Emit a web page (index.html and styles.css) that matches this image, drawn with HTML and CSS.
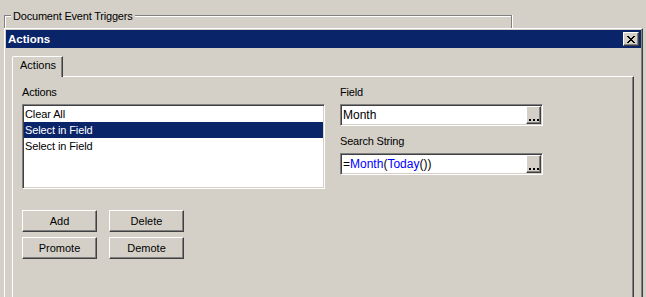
FILE: index.html
```html
<html>
<head>
    <title>Actions</title>
    <link rel="stylesheet" href="styles.css">
</head>
<body>
<div class="group">
    <span class="legend">Document Event Triggers</span>
</div>
<div class="dialog">
    <div class="titlebar">
        <span class="title">Actions</span>
        <button class="close" type="button">
            <svg width="8" height="7" viewBox="0 0 8 7" shape-rendering="crispEdges">
                <rect x="0" y="0" width="2" height="1"/><rect x="6" y="0" width="2" height="1"/>
                <rect x="1" y="1" width="2" height="1"/><rect x="5" y="1" width="2" height="1"/>
                <rect x="2" y="2" width="4" height="1"/>
                <rect x="3" y="3" width="2" height="1"/>
                <rect x="2" y="4" width="4" height="1"/>
                <rect x="1" y="5" width="2" height="1"/><rect x="5" y="5" width="2" height="1"/>
                <rect x="0" y="6" width="2" height="1"/><rect x="6" y="6" width="2" height="1"/>
            </svg>
        </button>
    </div>
    <div class="tabs">
        <div class="tab-row">
            <div class="tab">Actions</div>
        </div>
        <div class="panel">
            <div class="cols">
                <div>
                    <div class="label">Actions</div>
                    <div class="listbox">
                        <div class="item">Clear All</div>
                        <div class="item selected">Select in Field</div>
                        <div class="item">Select in Field</div>
                    </div>
                </div>
                <div>
                    <div class="label">Field</div>
                    <div class="field">
                        <span class="value">Month</span>
                        <span class="browse"><i></i><i></i><i></i></span>
                    </div>
                    <div class="label second">Search String</div>
                    <div class="field">
                        <span class="value">=<span class="fn">Month</span>(<span class="fn">Today</span>())</span>
                        <span class="browse"><i></i><i></i><i></i></span>
                    </div>
                </div>
            </div>
            <div class="buttons">
                <button type="button">Add</button>
                <button type="button">Delete</button>
                <button type="button">Promote</button>
                <button type="button">Demote</button>
            </div>
        </div>
    </div>
</div>
</body>
</html>
```

FILE: styles.css
```css
html, body {
    margin: 0;
    background-color: #D4D0C8;
    color: #000;
    font-family: "Liberation Sans", Arial, sans-serif;
    font-size: 11px;
    overflow: hidden;
}

/* etched group frame behind the dialog */
.group {
    box-sizing: border-box;
    margin: 15px 0 0 4px;
    width: 508px;
    height: 13px;
    border: 1px solid #808080;
    border-bottom: none;
    box-shadow: inset 1px 1px 0 #fff, 1px 0 0 #fff;
}

.legend {
    display: inline-block;
    margin: -6px 0 0 6px;
    padding: 0 2px;
    line-height: 13px;
    letter-spacing: -0.2px;
    background-color: #D4D0C8;
}

/* raised 3d look shared by window, buttons */
.dialog, .close, .browse, button {
    border: 1px solid;
    border-color: #fff #404040 #404040 #fff;
    box-shadow: inset -1px -1px 0 #808080;
    background-color: #D4D0C8;
}

.dialog {
    box-sizing: border-box;
    margin-left: 4px;
    width: 639px;
    height: 290px;
    padding: 1px;
}

.titlebar {
    display: flex;
    align-items: center;
    justify-content: space-between;
    height: 18px;
    padding-left: 2px;
    background-color: #0A246A;
}

.title {
    color: #fff;
    font-weight: bold;
    font-size: 11.5px;
}

.close {
    display: flex;
    align-items: center;
    justify-content: center;
    box-sizing: border-box;
    width: 16px;
    height: 14px;
    margin-right: 2px;
    padding: 0;
}

.tabs {
    margin: 8px 7px 0 6px;
}

.tab-row {
    display: flex;
    height: 20px;
}

.tab {
    position: relative;
    z-index: 1;
    box-sizing: border-box;
    width: 51px;
    height: 21px;
    padding: 1px 0 0 7px;
    line-height: 14px;
    border: 1px solid #fff;
    border-right-color: #404040;
    border-bottom: none;
    border-top-left-radius: 2px;
    box-shadow: inset -1px 0 0 #808080;
    background-color: #D4D0C8;
}

.panel {
    height: 240px;
    padding: 8px 0 0 9px;
    border: 1px solid;
    border-color: #fff #404040 #404040 #fff;
    box-shadow: inset -1px -1px 0 #808080;
}

.cols {
    display: grid;
    grid-template-columns: 303px 203px;
    column-gap: 15px;
    align-items: start;
}

.label {
    height: 14px;
    line-height: 14px;
    margin-bottom: 5px;
    letter-spacing: -0.2px;
}

.label.second {
    margin-top: 8px;
}

/* sunken white boxes */
.listbox, .field {
    box-sizing: border-box;
    border: 1px solid;
    border-color: #808080 #fff #fff #808080;
    box-shadow: inset 1px 1px 0 #404040, inset -1px -1px 0 #D4D0C8;
    background-color: #fff;
    padding: 1px;
}

.listbox {
    height: 85px;
}

.item {
    height: 16px;
    line-height: 16px;
    padding-left: 1px;
    letter-spacing: -0.1px;
}

.item.selected {
    background-color: #0A246A;
    color: #fff;
}

.field {
    display: flex;
    height: 22px;
}

.value {
    flex: 1;
    padding-left: 1px;
    line-height: 18px;
    font-size: 12px;
}

.fn {
    color: #0000FF;
}

.browse {
    box-sizing: border-box;
    display: flex;
    align-items: flex-end;
    justify-content: center;
    gap: 2px;
    width: 15px;
    height: 18px;
    padding-bottom: 2px;
}

.browse i {
    width: 2px;
    height: 2px;
    background-color: #000;
}

.buttons {
    display: grid;
    grid-template-columns: 75px 75px;
    gap: 5px 12px;
    margin-top: 21px;
}

button {
    height: 22px;
    padding: 0;
    font-family: "Liberation Sans", Arial, sans-serif;
    font-size: 11px;
    color: #000;
}
```
